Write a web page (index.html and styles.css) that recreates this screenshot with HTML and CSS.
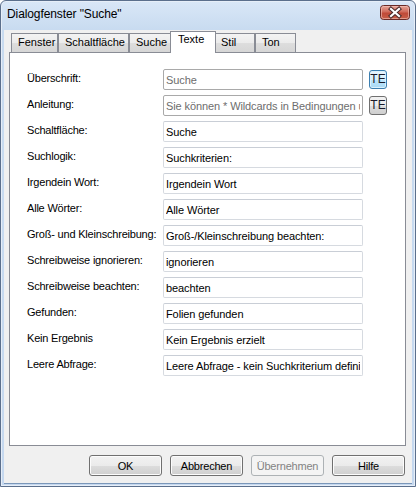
FILE: index.html
```html
<!DOCTYPE html>
<html lang="de">
<head>
<meta charset="utf-8">
<title>Dialogfenster "Suche"</title>
<link rel="stylesheet" href="styles.css">
</head>
<body>
<div class="window">
  <div class="titlebar">
    <span class="title">Dialogfenster "Suche"</span>
    <span class="close" aria-label="Schließen">
      <svg width="30" height="15" viewBox="0 0 30 15">
        <defs>
          <linearGradient id="cg" x1="0" y1="0" x2="0" y2="1">
            <stop offset="0" stop-color="#e8a99c"/>
            <stop offset="0.45" stop-color="#d06a5a"/>
            <stop offset="0.55" stop-color="#c04a38"/>
            <stop offset="1" stop-color="#c8604a"/>
          </linearGradient>
        </defs>
        <rect x="0.5" y="0.5" width="29" height="14" rx="3" ry="3" fill="url(#cg)" stroke="#6a2a26"/>
        <rect x="1.5" y="1.5" width="27" height="12" rx="2" ry="2" fill="none" stroke="#f2c4bb" stroke-opacity="0.6"/>
        <path d="M11 4 L19 11 M19 4 L11 11" stroke="#4a2a2a" stroke-width="4.2" stroke-linecap="square" fill="none"/>
        <path d="M11 4 L19 11 M19 4 L11 11" stroke="#ffffff" stroke-width="2.2" stroke-linecap="square" fill="none"/>
      </svg>
    </span>
  </div>
  <div class="client">
    <div class="tabs">
      <div class="tab tab-fenster">Fenster</div>
      <div class="tab tab-schalt">Schaltfläche</div>
      <div class="tab tab-suche">Suche</div>
      <div class="tab tab-texte selected">Texte</div>
      <div class="tab tab-stil">Stil</div>
      <div class="tab tab-ton">Ton</div>
    </div>
    <div class="panel">
      <div class="row">
        <label class="lbl">Überschrift:</label>
        <input class="field disabled" type="text" value="Suche" readonly>
        <button class="te te-hot">TE</button>
      </div>
      <div class="row">
        <label class="lbl">Anleitung:</label>
        <input class="field disabled" type="text" value="Sie können * Wildcards in Bedingungen und Ausdrücken verwenden" readonly>
        <button class="te">TE</button>
      </div>
      <div class="row">
        <label class="lbl">Schaltfläche:</label>
        <input class="field" type="text" value="Suche">
      </div>
      <div class="row">
        <label class="lbl">Suchlogik:</label>
        <input class="field" type="text" value="Suchkriterien:">
      </div>
      <div class="row">
        <label class="lbl">Irgendein Wort:</label>
        <input class="field" type="text" value="Irgendein Wort">
      </div>
      <div class="row">
        <label class="lbl">Alle Wörter:</label>
        <input class="field" type="text" value="Alle Wörter">
      </div>
      <div class="row">
        <label class="lbl">Groß- und Kleinschreibung:</label>
        <input class="field" type="text" value="Groß-/Kleinschreibung beachten:">
      </div>
      <div class="row">
        <label class="lbl">Schreibweise ignorieren:</label>
        <input class="field" type="text" value="ignorieren">
      </div>
      <div class="row">
        <label class="lbl">Schreibweise beachten:</label>
        <input class="field" type="text" value="beachten">
      </div>
      <div class="row">
        <label class="lbl">Gefunden:</label>
        <input class="field" type="text" value="Folien gefunden">
      </div>
      <div class="row">
        <label class="lbl">Kein Ergebnis</label>
        <input class="field" type="text" value="Kein Ergebnis erzielt">
      </div>
      <div class="row">
        <label class="lbl">Leere Abfrage:</label>
        <input class="field" type="text" value="Leere Abfrage - kein Suchkriterium definiert">
      </div>
    </div>
    <div class="buttons">
      <button class="btn">OK</button>
      <button class="btn">Abbrechen</button>
      <button class="btn btn-disabled" disabled>Übernehmen</button>
      <button class="btn">Hilfe</button>
    </div>
  </div>
</div>
</body>
</html>
```
FILE: styles.css
```css
* { box-sizing: border-box; }
html, body {
  margin: 0;
  padding: 0;
  background: #ffffff;
}
body {
  font-family: "Liberation Sans", Arial, sans-serif;
  font-size: 11px;
  color: #000;
}
.window {
  width: 416px;
  height: 487px;
  border: 1px solid #5b6f8c;
  border-radius: 6px 6px 0 0;
  background: linear-gradient(to bottom, #d9e7f7 0px, #c8dbf0 29px, #c5d8ef 100%);
  padding: 0 3px 3px 3px;
  display: flex;
  flex-direction: column;
  box-shadow: inset 0 0 0 1px #e6eef8;
}
.titlebar {
  height: 29px;
  display: flex;
  align-items: flex-start;
  padding: 0 2px 0 3px;
  flex: none;
}
.title {
  font-size: 12px;
  line-height: 14px;
  margin-top: 6px;
  color: #000;
  letter-spacing: -0.1px;
}
.close {
  margin-left: auto;
  margin-top: 4px;
  width: 30px;
  height: 15px;
  display: block;
}
.close svg { display: block; }
.client {
  flex: 1;
  background: #f0f0f0;
  padding: 1px 7px 7px 5px;
  display: flex;
  flex-direction: column;
  border-bottom: 1px solid #7b97b9;
}
.tabs {
  display: flex;
  align-items: flex-end;
  height: 21px;
  padding-left: 2px;
  flex: none;
}
.tab {
  height: 19px;
  border: 1px solid #898c95;
  border-bottom: none;
  background: linear-gradient(to bottom, #f3f3f3 0%, #ebebeb 50%, #dddddd 51%, #d6d6d6 100%);
  padding-left: 6px;
  line-height: 17px;
  white-space: nowrap;
  font-size: 11px;
}
.tab-fenster { width: 47px; }
.tab-schalt { width: 71px; }
.tab-suche { width: 43px; }
.tab-stil { width: 41px; }
.tab-ton { width: 41px; }
.tab.selected {
  width: 46px;
  height: 22px;
  margin: 0 -2px -1px -2px;
  background: #ffffff;
  position: relative;
  z-index: 1;
  padding-left: 7px;
  line-height: 15px;
}
.panel {
  width: 397px;
  height: 394px;
  border: 1px solid #898c95;
  background: #ffffff;
  padding: 16px 0 0 17px;
  display: flex;
  flex-direction: column;
  gap: 5px;
  flex: none;
}
.row {
  display: flex;
  align-items: flex-start;
  height: 21px;
}
.lbl {
  width: 136px;
  flex: none;
  padding-top: 3px;
  line-height: 13px;
  white-space: nowrap;
  letter-spacing: -0.2px;
}
.field {
  width: 200px;
  height: 21px;
  margin: 0;
  padding: 0 2px;
  font-family: "Liberation Sans", Arial, sans-serif;
  font-size: 11px;
  letter-spacing: -0.1px;
  color: #000;
  background: #ffffff;
  border: 1px solid #d6dae0;
  border-top-color: #c9ced6;
  border-radius: 2px;
  outline: none;
}
.field.disabled {
  color: #6d6d6d;
  border-color: #a9a9a9;
}
.te {
  width: 18px;
  height: 19px;
  margin: 1px 0 0 6px;
  padding: 0;
  font-family: "Liberation Sans", Arial, sans-serif;
  font-size: 12px;
  line-height: 17px;
  color: #1a1a2a;
  border: 1px solid #707070;
  border-radius: 3px;
  background: linear-gradient(to bottom, #f2f2f2 0%, #ebebeb 50%, #dddddd 51%, #cfcfcf 100%);
  text-align: center;
}
.te-hot {
  border-color: #3c7fb1;
  background: linear-gradient(to bottom, #eaf6fd 0%, #d9f0fc 50%, #bee6fd 51%, #a7d9f5 100%);
  box-shadow: inset 0 0 0 1px #ddf1fc;
}
.buttons {
  display: flex;
  justify-content: flex-end;
  gap: 8px;
  margin-top: 9px;
  flex: none;
}
.btn {
  width: 73px;
  height: 21px;
  margin: 0;
  padding: 0;
  font-family: "Liberation Sans", Arial, sans-serif;
  font-size: 11px;
  letter-spacing: -0.2px;
  color: #000;
  border: 1px solid #707070;
  border-radius: 3px;
  background: linear-gradient(to bottom, #f2f2f2 0%, #ebebeb 50%, #dddddd 51%, #cfcfcf 100%);
  box-shadow: inset 0 0 0 1px #fcfcfc;
}
.btn-disabled {
  color: #838383;
  border-color: #adb2b5;
  background: #f4f4f4;
  box-shadow: none;
}
```
